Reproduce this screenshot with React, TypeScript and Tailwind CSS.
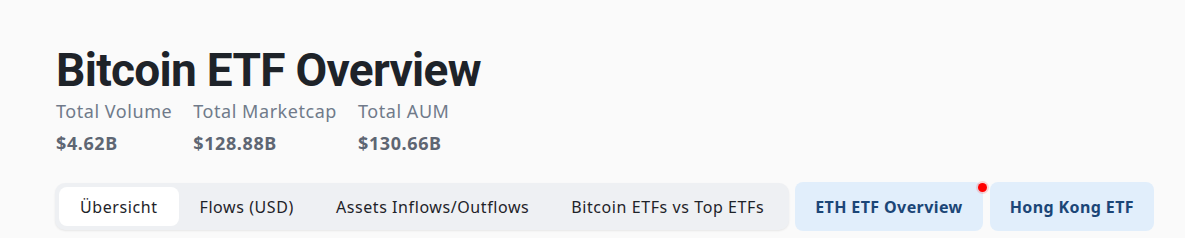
export default function App() {
  const stats = [
    { label: "Total Volume", value: "$4.62B" },
    { label: "Total Marketcap", value: "$128.88B" },
    { label: "Total AUM", value: "$130.66B" },
  ];
  const tabs = ["Übersicht", "Flows (USD)", "Assets Inflows/Outflows", "Bitcoin ETFs vs Top ETFs"];

  return (
    <div className="h-[238px] w-full bg-[#fafafa] pl-[56px] pt-[43px] font-['Noto_Sans',sans-serif] text-[#1e2329]">
      <h1 className="font-['Roboto',sans-serif] text-[46px] font-bold leading-[54px] tracking-[-0.7px]">
        Bitcoin ETF Overview
      </h1>
      <div className="mt-[2px] flex gap-[21px]">
        {stats.map((s) => (
          <div key={s.label} className="flex flex-col">
            <span className="text-[18px] leading-[24px] tracking-[0.55px] text-[#707a8a]">{s.label}</span>
            <span className="mt-[8px] text-[18px] font-bold leading-[24px] tracking-[0.6px] text-[#5e6673]">
              {s.value}
            </span>
          </div>
        ))}
      </div>
      <div className="mt-[27px] flex items-center">
        <div className="-ml-[1px] flex h-[47px] items-center rounded-[10px] bg-[#eef0f3] p-[4px] shadow-[0_1px_2px_rgba(0,0,0,0.08)]">
          {tabs.map((t, i) => (
            <div
              key={t}
              className={`flex h-[39px] items-center rounded-[8px] px-[21px] text-[16px] tracking-[0.58px] ${
                i === 0 ? "bg-white text-[#1e2329]" : "text-[#1e2329]"
              }`}
            >
              {t}
            </div>
          ))}
        </div>
        <div className="relative ml-[6px] flex h-[49px] items-center rounded-[8px] bg-[#e1eefb] px-[20px] text-[16px] font-bold tracking-[0.4px] text-[#1b4677]">
          ETH ETF Overview
          <span className="absolute -right-[4px] top-[1px] h-[9px] w-[9px] rounded-full bg-[#f00] shadow-[0_0_0_2px_rgba(255,0,0,0.15)]" />
        </div>
        <div className="ml-[7px] flex h-[49px] items-center rounded-[8px] bg-[#e1eefb] px-[20px] text-[16px] font-bold tracking-[0.4px] text-[#1b4677]">
          Hong Kong ETF
        </div>
      </div>
    </div>
  );
}
